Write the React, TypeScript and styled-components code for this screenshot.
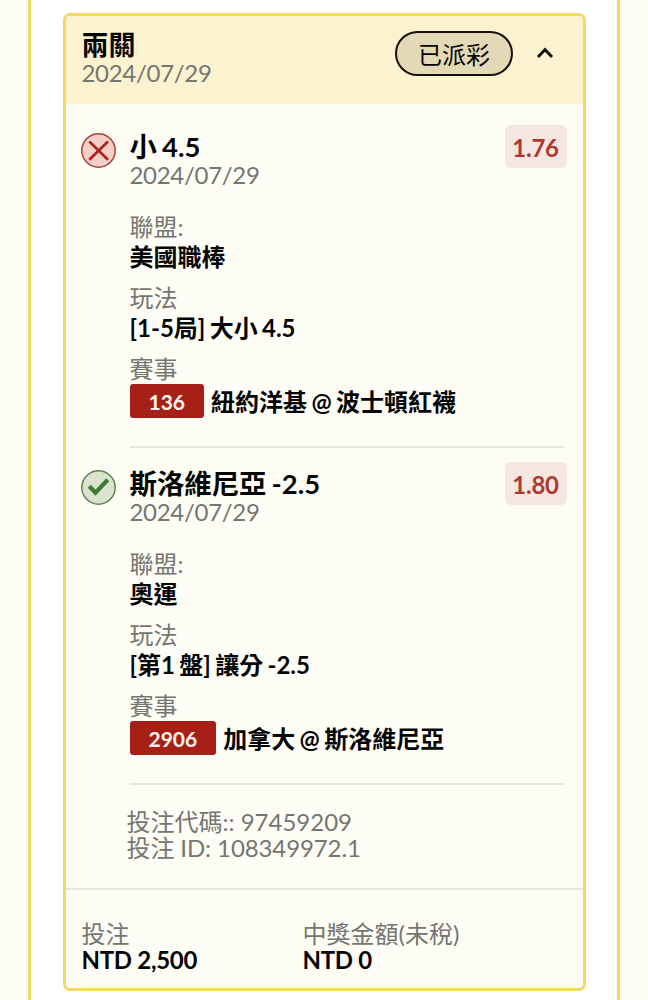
import React from "react";
import styled, { createGlobalStyle } from "styled-components";

const GlobalStyle = createGlobalStyle`
  * { box-sizing: border-box; }
  html, body { margin: 0; padding: 0; background: #fefdf5; }
  body {
    font-family: Lato, "Noto Sans CJK TC", sans-serif;
    font-size: 24px;
    color: #050505;
    overflow: hidden;
  }
`;

const Page = styled.main`
  height: 1000px;
  padding: 0 28px;
  background: #fefdf5;
  overflow: hidden;
`;

const Panel = styled.section`
  height: 100%;
  padding: 12.5px 31px 0 31.5px;
  background: #fff;
  border: solid #f0da63;
  border-width: 0 3px;
`;

const Card = styled.article`
  height: 978.5px;
  display: flex;
  flex-direction: column;
  background: #fefdf5;
  border: 3.5px solid #f0da63;
  border-radius: 7px;
  overflow: hidden;
`;

const Header = styled.header`
  display: flex;
  justify-content: space-between;
  height: 88px;
  flex: none;
  padding: 15px 27px 0 16px;
  background: #fbf2cf;
`;

const Actions = styled.div`
  display: flex;
  align-items: center;
  gap: 20px;
  height: 46px;
`;

const Status = styled.span`
  width: 118px;
  height: 45px;
  margin-right: 1px;
  border: 2px solid #15120a;
  border-radius: 23px;
  background: #e3d9b6;
  text-align: center;
  line-height: 43px;
`;

const Toggle = styled.button`
  display: flex;
  width: 22px;
  height: 30px;
  padding: 0;
  border: 0;
  background: none;
  align-items: center;
  justify-content: center;
`;

const Title = styled.h2`
  margin: 0;
  height: 29px;
  line-height: 28px;
  font-size: 27px;
  font-weight: 700;
  word-spacing: -1.5px;
  white-space: nowrap;
`;

const LegTitle = styled(Title)`
  font-size: 27.4px;
`;

const DateText = styled.div`
  height: 26px;
  line-height: 26px;
  letter-spacing: -0.3px;
  color: #757571;
`;

const Leg = styled.section`
  display: grid;
  grid-template-columns: 35px 1fr;
  column-gap: 14px;
  height: 337px;
  flex: none;
  margin: 0 15.5px 0 15px;
`;

const LegIcon = styled.svg`
  width: 35px;
  height: 35px;
  margin-top: 29.5px;
`;

const LegBody = styled.div`
  padding-top: 21px;
`;

const LegHead = styled.div`
  display: flex;
  justify-content: space-between;
  height: 87px;
`;

const LegName = styled.div`
  padding-top: 8px;
`;

const Odds = styled.span`
  width: 62px;
  height: 43px;
  margin-right: 1px;
  border-radius: 6px;
  background: #f4e7e1;
  color: #ad3932;
  font-weight: 700;
  line-height: 45px;
  letter-spacing: -0.2px;
  text-align: center;
`;

const Field = styled.div`
  height: 71px;
  white-space: nowrap;
`;

const Label = styled.div`
  height: 30px;
  line-height: 29px;
  color: #757571;
`;

const Value = styled.div`
  display: flex;
  align-items: center;
  height: 29px;
  line-height: 29px;
  font-weight: 700;
  word-spacing: -1.5px;
`;

const MatchValue = styled(Value)`
  gap: 7px;
  height: 35px;
  line-height: 35px;
`;

const MatchNumber = styled.span`
  height: 34px;
  padding: 0 19px;
  border-radius: 3px;
  background: #a62017;
  color: #fdf4ec;
  font-size: 21px;
  line-height: 36px;
`;

const Rule = styled.hr`
  height: 2px;
  margin: 21px 4px 0 0;
  border: 0;
  background: #e5e4de;
`;

const Codes = styled.div`
  height: 110px;
  flex: none;
  padding: 31px 0 0 61px;
  line-height: 26px;
  color: #757571;
`;

const BetId = styled.div`
  letter-spacing: -0.1px;
`;

const Footer = styled.footer`
  display: grid;
  grid-template-columns: 221px 1fr;
  flex: 1;
  padding: 31px 16px 0;
  border-top: 2px solid #e5e4de;
`;

const Amount = styled.div`
  height: 26px;
  line-height: 26px;
  font-weight: 700;
  letter-spacing: -0.3px;
`;

const AmountLabel = styled(Label)`
  height: 26px;
  line-height: 26px;
`;

const LostIcon = () => (
  <LegIcon viewBox="0 0 35 35" fill="none">
    <circle cx="17.5" cy="17.5" r="16.7" fill="#f3cfc8" stroke="#a8403b" strokeWidth="1.5" />
    <path d="M8.3 8.5 27 26.7M27 8.5 8.3 26.7" stroke="#b0241d" strokeWidth="2.7" />
  </LegIcon>
);

const WonIcon = () => (
  <LegIcon viewBox="0 0 35 35" fill="none">
    <circle cx="17.5" cy="17.5" r="16.7" fill="#dbe3cf" stroke="#5c8750" strokeWidth="1.5" />
    <path d="m8.3 16.2 6.2 6.6L26.8 9.8" stroke="#417a2f" strokeWidth="4.2" />
  </LegIcon>
);

type LegData = {
  won: boolean;
  name: string;
  odds: string;
  league: string;
  play: string;
  number: string;
  match: string;
};

const legs: LegData[] = [
  { won: false, name: "小 4.5", odds: "1.76", league: "美國職棒", play: "[1-5局] 大小 4.5", number: "136", match: "紐約洋基 @ 波士頓紅襪" },
  { won: true, name: "斯洛維尼亞 -2.5", odds: "1.80", league: "奧運", play: "[第1 盤] 讓分 -2.5", number: "2906", match: "加拿大 @ 斯洛維尼亞" },
];

const BetLeg = ({ leg }: { leg: LegData }) => (
  <Leg>
    {leg.won ? <WonIcon /> : <LostIcon />}
    <LegBody>
      <LegHead>
        <LegName>
          <LegTitle>{leg.name}</LegTitle>
          <DateText>2024/07/29</DateText>
        </LegName>
        <Odds>{leg.odds}</Odds>
      </LegHead>
      <Field>
        <Label>聯盟:</Label>
        <Value>{leg.league}</Value>
      </Field>
      <Field>
        <Label>玩法</Label>
        <Value>{leg.play}</Value>
      </Field>
      <Field>
        <Label>賽事</Label>
        <MatchValue>
          <MatchNumber>{leg.number}</MatchNumber>
          <span>{leg.match}</span>
        </MatchValue>
      </Field>
      <Rule />
    </LegBody>
  </Leg>
);

export default function App() {
  return (
    <Page>
      <GlobalStyle />
      <Panel>
        <Card>
          <Header>
            <div>
              <Title>兩關</Title>
              <DateText>2024/07/29</DateText>
            </div>
            <Actions>
              <Status>已派彩</Status>
              <Toggle aria-label="收合">
                <svg width="18" height="13" viewBox="0 0 18 13" fill="none">
                  <path d="m2 10 7-7.3 7 7.3" stroke="#111" strokeWidth="2.9" />
                </svg>
              </Toggle>
            </Actions>
          </Header>
          {legs.map((leg) => (
            <BetLeg key={leg.number} leg={leg} />
          ))}
          <Codes>
            <div>投注代碼:: 97459209</div>
            <BetId>投注 ID: 108349972.1</BetId>
          </Codes>
          <Footer>
            <div>
              <AmountLabel>投注</AmountLabel>
              <Amount>NTD 2,500</Amount>
            </div>
            <div>
              <AmountLabel>中獎金額(未稅)</AmountLabel>
              <Amount>NTD 0</Amount>
            </div>
          </Footer>
        </Card>
      </Panel>
    </Page>
  );
}
